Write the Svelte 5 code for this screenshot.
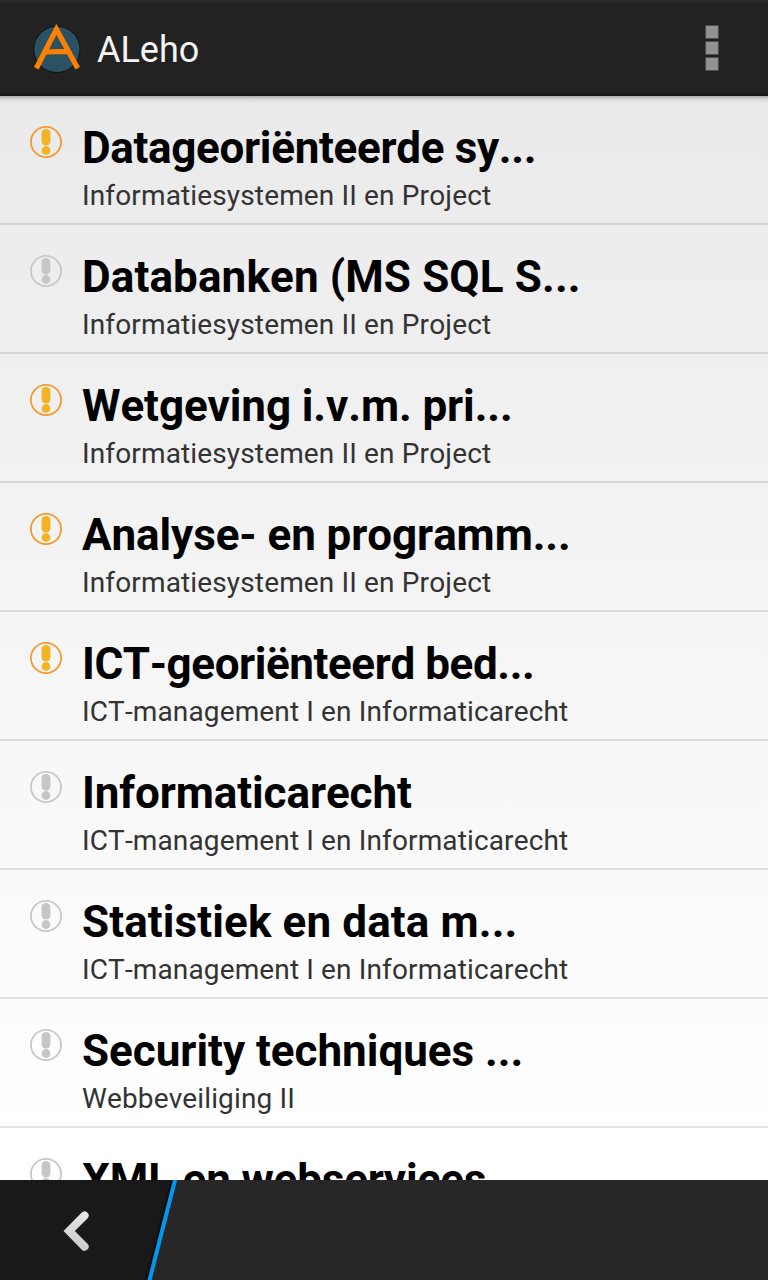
<script>
  const project = { name: 'Informatiesystemen II en Project', spacing: 0.14 };
  const law = { name: 'ICT-management I en Informaticarecht', spacing: 0.13 };
  const security = { name: 'Webbeveiliging II', spacing: 0.13 };
  const courses = [
    { title: 'Datageoriënteerde sy...', spacing: -0.32, module: project, unread: true },
    { title: 'Databanken (MS SQL S...', spacing: 0.12, module: project, unread: false },
    { title: 'Wetgeving i.v.m. pri...', spacing: -0.09, module: project, unread: true },
    { title: 'Analyse- en programm...', spacing: -0.08, module: project, unread: true },
    { title: 'ICT-georiënteerd bed...', spacing: -0.42, module: law, unread: true },
    { title: 'Informaticarecht', spacing: -0.09, module: law, unread: false },
    { title: 'Statistiek en data m...', spacing: 0.11, module: law, unread: false },
    { title: 'Security techniques ...', spacing: -0.02, module: security, unread: false },
    { title: 'XML en webservices', spacing: -0.16, module: null, unread: false }
  ];
</script>

<div class="screen">
  <header>
    <svg class="logo" width="52" height="56" viewBox="0 0 52 56" aria-hidden="true">
      <circle cx="26.9" cy="29.4" r="23.1" fill="#2b5163" stroke="#111" stroke-width="1" />
      <path d="M6.3 48.2 L26.4 9.2 L47.7 48.2 M15.5 32 L37.5 31.4" fill="none" stroke="#ff8000" stroke-width="5.2" stroke-miterlimit="10" />
    </svg>
    <h1>ALeho</h1>
    <button aria-label="Menu"><i></i><i></i><i></i></button>
  </header>

  <main>
    {#each courses as course}
      <article>
        <svg class="mark" class:unread={course.unread} width="32" height="32" viewBox="0 0 32 32" aria-hidden="true">
          <circle class="ring" cx="16" cy="16" r="15.1" />
          <rect x="11.6" y="3" width="8.8" height="16.5" rx="4.2" />
          <circle cx="16" cy="24.5" r="4.4" />
        </svg>
        <div class="text">
          <h2 style:letter-spacing="{course.spacing}px">{course.title}</h2>
          {#if course.module}
            <p style:letter-spacing="{course.module.spacing}px">{course.module.name}</p>
          {/if}
        </div>
      </article>
    {/each}
  </main>

  <footer>
    <svg width="180" height="100" viewBox="0 0 180 100" aria-hidden="true">
      <defs>
        <linearGradient id="arrow" x1="0" y1="0" x2="0" y2="1">
          <stop offset="0" stop-color="#e6e6e6" />
          <stop offset="1" stop-color="#cacaca" />
        </linearGradient>
      </defs>
      <path d="M0 0 H175 L149.5 100 H0 Z" fill="#191919" />
      <path d="M172 0 L146.5 100" stroke="#101010" stroke-width="3" />
      <path d="M175.3 -1 L149.3 101" stroke="#0098f0" stroke-width="4" />
      <path d="M63.5 51 L81.5 32.8 A4.1 4.1 0 0 1 87.5 38.4 L74.8 51 L87.5 63.8 A4.1 4.1 0 0 1 81.5 69.4 Z" fill="url(#arrow)" />
    </svg>
  </footer>
</div>

<style>
  :global(body) { margin: 0; overflow: hidden; }
  .screen {
    width: 768px;
    height: 1280px;
    display: flex;
    flex-direction: column;
    font-family: Roboto, sans-serif;
    overflow: hidden;
  }
  header {
    box-sizing: border-box;
    flex: 0 0 96px;
    display: flex;
    align-items: center;
    padding: 0 44px 0 30px;
    background: linear-gradient(#303030 0, #2a2a2a 2px, #222 3px, #222 91px, #1a1a1a 95px);
  }
  .logo { flex: none; }
  h1 { margin: 3px 0 0 15px; font-size: 36px; line-height: 44px; font-weight: 400; color: #f3f3f3; }
  button {
    margin-left: auto;
    padding: 0 6px;
    border: 0;
    background: none;
    display: flex;
    flex-direction: column;
    gap: 4px;
  }
  i { width: 12px; height: 12px; background: #929292; box-shadow: 0 0 0 1px #4b4b4b; }
  main {
    flex: 1 1 0;
    min-height: 0;
    overflow: hidden;
    background:
      linear-gradient(#a5a5a5 0, #c8c8c8 2px, #dedede 4px, #e6e6e600 8px),
      linear-gradient(#eaeaea, #fff 1040px);
  }
  article {
    box-sizing: border-box;
    height: 129px;
    display: flex;
    padding: 30px 0 0 30px;
    border-bottom: 2px solid rgba(0, 0, 0, 0.11);
  }
  .mark { flex: none; fill: #c6c6c6; }
  .mark .ring { fill: none; stroke: #c8c8c8; stroke-width: 1.8; }
  .mark.unread { fill: #f3b322; }
  .mark.unread .ring { stroke: #f39a30; }
  .text { margin-left: 20px; white-space: nowrap; font-kerning: none; }
  h2 { margin: -4px 0 0; font-size: 44px; line-height: 52px; font-weight: 700; color: #000; }
  p { margin: 5px 0 0; font-size: 28px; line-height: 34px; color: #333; }
  footer { flex: 0 0 100px; background: #272727; }
  footer svg { display: block; }
</style>
